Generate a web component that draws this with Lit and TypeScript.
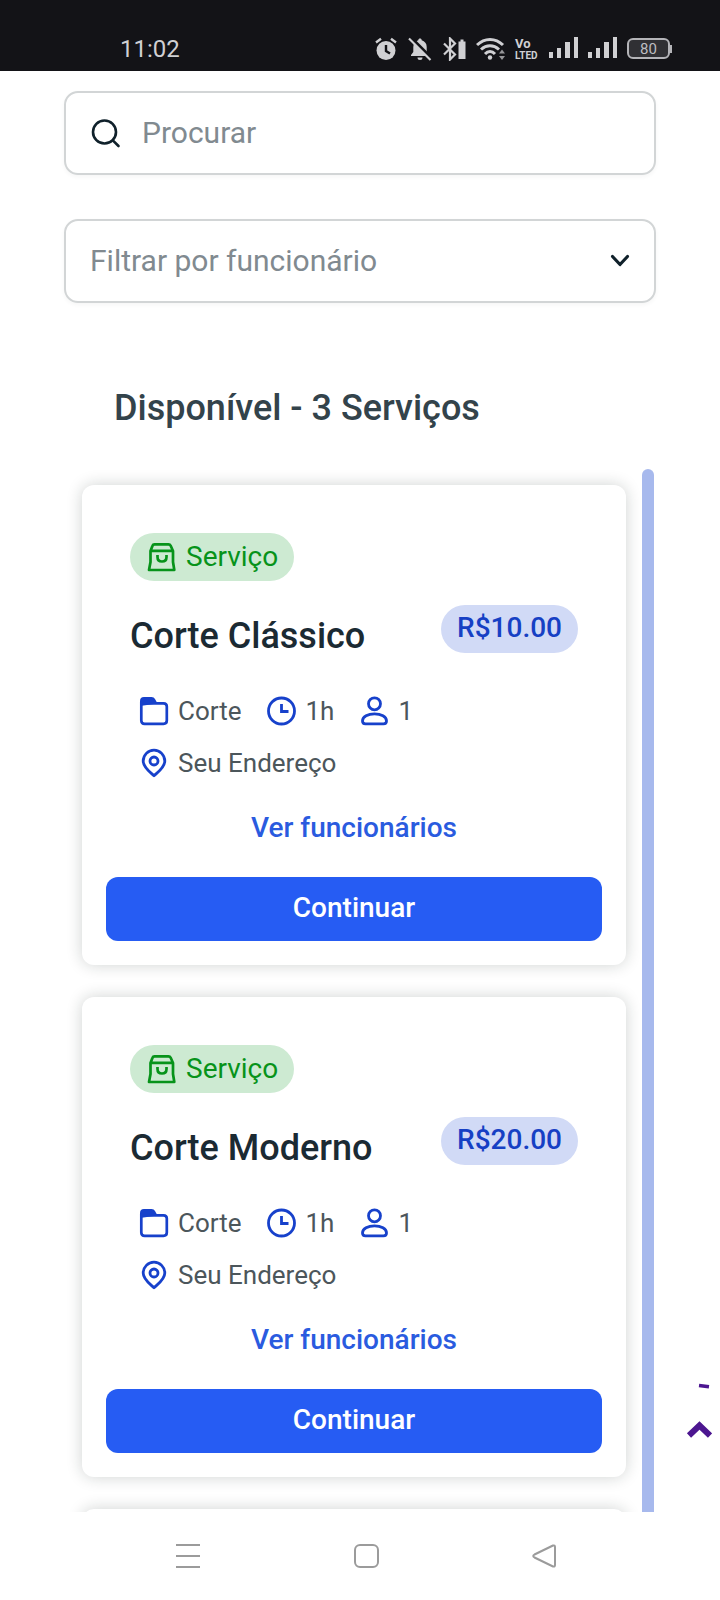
import { LitElement, html, css, svg } from "lit";
import { customElement, property } from "lit/decorators.js";

interface Service {
  name: string;
  price: string;
  category: string;
  duration: string;
  staff: number;
  address: string;
}

const services: Service[] = [
  { name: "Corte Clássico", price: "R$10.00", category: "Corte", duration: "1h", staff: 1, address: "Seu Endereço" },
  { name: "Corte Moderno", price: "R$20.00", category: "Corte", duration: "1h", staff: 1, address: "Seu Endereço" },
];

const bars = svg`<path d="M0 15h4v6H0zM8 11h4v10H8zM16 5h5v16h-5zM25 0h4v21h-4z" fill="currentColor"/>`;

@customElement("status-bar")
export class StatusBar extends LitElement {
  static styles = css`
    :host {
      display: flex;
      align-items: center;
      justify-content: space-between;
      box-sizing: border-box;
      height: 71px;
      padding: 26px 48px 0 120px;
      background: #131317;
      color: #d0d0d3;
      flex: none;
    }
    .time {
      font-size: 24px;
      line-height: 28px;
    }
    .icons {
      display: flex;
      align-items: center;
      gap: 10px;
    }
    svg {
      display: block;
    }
    .network {
      overflow: visible;
      font-weight: 700;
    }
    .battery {
      display: flex;
      align-items: center;
    }
    .level {
      box-sizing: border-box;
      width: 43px;
      height: 21px;
      border: 2px solid #b4b4b8;
      border-radius: 6px;
      font-size: 15px;
      line-height: 18px;
      text-align: center;
      background: #303034;
      color: #bdbdc1;
    }
    .tip {
      width: 2px;
      height: 8px;
      background: #b4b4b8;
    }
  `;

  render() {
    return html`
      <span class="time">11:02</span>
      <div class="icons">
        <svg width="24" height="24" viewBox="0 0 24 24" fill="none">
          <circle cx="12" cy="13.500" r="9.500" fill="currentColor" />
          <path d="M2 5.500 7 1.800M22 5.500 17 1.800" stroke="currentColor" stroke-width="2.400" />
          <path d="M12 8v6l4 2.500" stroke="#131317" stroke-width="2.400" />
        </svg>
        <svg width="24" height="24" viewBox="0 0 24 24">
          <path d="M12 1.500c1 0 1.700.7 1.700 1.700 3 .8 5 3.300 5 6.800v5l2.300 3v1H3v-1l2.300-3v-5c0-3.500 2-6 5-6.800 0-1 .7-1.700 1.700-1.700zM9.500 20.500h5a2.500 2.500 0 0 1-5 0z" fill="currentColor" />
          <path d="M3 .5 24 21.500" stroke="#131317" stroke-width="3" />
          <path d="M1 1.500 22.500 23" stroke="currentColor" stroke-width="2.200" />
        </svg>
        <svg width="24" height="24" viewBox="0 0 24 24" fill="none">
          <path d="M2 6.500 13 17.500 8 22.500v-21L13 6.500 2 17.500" stroke="currentColor" stroke-width="2.200" />
          <path d="M16.500 4.500h2V2.500h3v2h2V22h-7z" fill="currentColor" />
        </svg>
        <svg width="29" height="24" viewBox="0 0 29 24" fill="none" stroke="currentColor">
          <path d="M1 8c7.500-7.500 18.500-7.500 26 0" stroke-width="3" />
          <path d="M5 12.500c5.500-5 12.500-5 18 0" stroke-width="3" />
          <path d="M9 17c3-3.200 7-3.200 10 0" stroke-width="3" />
          <circle cx="14" cy="20.500" r="2.200" fill="currentColor" stroke="none" />
          <path d="M23 16.500l3-4 3 4zM23 19l3 4 3-4z" fill="currentColor" stroke="none" opacity=".7" />
        </svg>
        <svg class="network" width="24" height="32" viewBox="0 -4 24 32" fill="currentColor">
          <text x="0" y="11" font-size="13">Vo</text>
          <text x="0" y="22" font-size="10">LTED</text>
        </svg>
        <svg width="29" height="23" viewBox="0 0 29 23">${bars}</svg>
        <svg width="29" height="23" viewBox="0 0 29 23">${bars}</svg>
        <div class="battery"><div class="level">80</div><div class="tip"></div></div>
      </div>
    `;
  }
}

@customElement("service-card")
export class ServiceCard extends LitElement {
  @property({ attribute: false }) service?: Service;

  static styles = css`
    :host {
      display: block;
    }
    .card {
      box-sizing: border-box;
      min-height: 480px;
      padding: 24px;
      border-radius: 12px;
      background: #fff;
      box-shadow: 0 0 16px rgba(20, 35, 30, 0.2);
    }
    .info {
      padding: 24px 24px 0;
    }
    svg {
      display: block;
      flex: none;
    }
    .badge {
      display: inline-flex;
      align-items: center;
      gap: 8px;
      height: 48px;
      padding: 0 16px;
      border-radius: 24px;
      background: #cdead2;
      color: #07931a;
      font-size: 28px;
      line-height: 46px;
      vertical-align: top;
    }
    .heading {
      display: flex;
      justify-content: space-between;
      align-items: flex-start;
      margin-top: 24px;
    }
    h2 {
      margin: 0;
      font-size: 36px;
      line-height: 62px;
      font-weight: 500;
      color: #1b2a33;
    }
    .price {
      height: 48px;
      padding: 0 16px;
      border-radius: 24px;
      background: #d1daf6;
      color: #1640c4;
      font-size: 28px;
      line-height: 46px;
      font-weight: 500;
    }
    .meta {
      display: flex;
      flex-wrap: wrap;
      column-gap: 24px;
      margin: 18px 0 0;
      padding: 0 0 0 8px;
      list-style: none;
      color: #4c565b;
      font-size: 26px;
      line-height: 52px;
    }
    .meta li {
      display: flex;
      align-items: center;
      gap: 8px;
    }
    .meta svg {
      color: #1741cb;
    }
    .address {
      flex-basis: 100%;
    }
    .staff {
      display: block;
      width: fit-content;
      margin: 19px auto 29px;
      padding: 0;
      border: 0;
      background: none;
      color: #2a5bdf;
      font: 500 28px/40px Roboto, sans-serif;
    }
    .continue {
      display: block;
      width: 100%;
      height: 64px;
      padding: 0 0 2px;
      border: 0;
      border-radius: 12px;
      background: #265cf3;
      color: #fff;
      font: 500 28px/32px Roboto, sans-serif;
    }
  `;

  render() {
    const s = this.service;
    if (!s) return html`<article class="card"></article>`;
    return html`
      <article class="card">
        <div class="info">
          <span class="badge">
            <svg width="32" height="32" viewBox="0 0 32 32" fill="none" stroke="currentColor" stroke-width="2.700" stroke-linejoin="round">
              <path d="M8.500 3.300h14q1.500 0 2.200 1.500L27 10v11l1.300 8H3l1.500-8V10l2-5.200Q7 3.300 8.500 3.300zM4.500 9.800H27M11.500 14v2q0 4.500 4.500 4.500t4.500-4.500v-2" />
            </svg>
            Serviço
          </span>
          <div class="heading">
            <h2>${s.name}</h2>
            <span class="price">${s.price}</span>
          </div>
          <ul class="meta">
            <li>
              <svg width="32" height="32" viewBox="0 0 32 32" fill="none">
                <path d="M2 11V6q0-4 4-4h7.500q2.500 0 3.500 2l2.500 4.500z" fill="currentColor" />
                <path d="M3.300 8.300h22.200q3.300 0 3.300 3.300v13.900q0 3.300-3.300 3.300H6.600q-3.300 0-3.300-3.300z" stroke="currentColor" stroke-width="2.700" />
              </svg>
              ${s.category}
            </li>
            <li>
              <svg width="32" height="32" viewBox="0 0 32 32" fill="none" stroke="currentColor" stroke-width="2.800">
                <circle cx="15.500" cy="16" r="13" />
                <path d="M15.500 9v7.500h7" />
              </svg>
              ${s.duration}
            </li>
            <li>
              <svg width="32" height="32" viewBox="0 0 32 32" fill="none" stroke="currentColor" stroke-width="2.800">
                <circle cx="16.500" cy="8.800" r="6" />
                <path d="M16.500 18.800c6.500 0 12 3 12 7.200 0 2-1 2.800-3 2.800h-18c-2 0-3-.8-3-2.800 0-4.200 5.500-7.200 12-7.200z" />
              </svg>
              ${s.staff}
            </li>
            <li class="address">
              <svg width="32" height="32" viewBox="0 0 32 32" fill="none" stroke="currentColor" stroke-width="2.800">
                <path d="M16 28.800C12 25 5.200 20.500 5.200 14a10.800 10.800 0 0 1 21.600 0c0 6.500-6.800 11-10.800 14.800z" stroke-linejoin="round" />
                <circle cx="16" cy="14" r="4" />
              </svg>
              ${s.address}
            </li>
          </ul>
        </div>
        <button class="staff" type="button">Ver funcionários</button>
        <button class="continue" type="button">Continuar</button>
      </article>
    `;
  }
}

@customElement("app-root")
export class AppRoot extends LitElement {
  static styles = css`
    :host {
      display: flex;
      flex-direction: column;
      height: 100vh;
      background: #fff;
      font-family: Roboto, sans-serif;
    }
    main {
      position: relative;
      display: flex;
      flex-direction: column;
      flex: 1;
      min-height: 0;
      overflow: hidden;
      padding: 20px 64px 0;
    }
    svg {
      display: block;
      flex: none;
    }
    .field {
      display: flex;
      align-items: center;
      box-sizing: border-box;
      flex: none;
      height: 84px;
      padding: 0 24px;
      border: 2px solid #d2d5d6;
      border-radius: 14px;
      box-shadow: 0 2px 4px rgba(0, 0, 0, 0.04);
      color: #10212b;
    }
    .search {
      gap: 20px;
      margin-bottom: 44px;
    }
    .field input,
    .field select {
      flex: 1;
      min-width: 0;
      height: 60px;
      margin: 0;
      padding: 0;
      border: 0;
      outline: 0;
      appearance: none;
      background: none;
      color: #818a90;
      font: 400 30px/40px Roboto, sans-serif;
    }
    .field input {
      padding-bottom: 2px;
    }
    .field input::placeholder {
      color: #818a90;
      opacity: 1;
    }
    h1 {
      margin: 81px 0 37px;
      padding-left: 50px;
      font-size: 36px;
      line-height: 48px;
      font-weight: 500;
      color: #33434b;
    }
    .results {
      display: flex;
      flex: 1;
      gap: 16px;
      min-height: 0;
      padding: 0 2px 0 18px;
    }
    .list {
      display: flex;
      flex-direction: column;
      flex: 1;
      gap: 32px;
      padding-top: 16px;
    }
    .scrollbar {
      width: 12px;
      border-radius: 6px 6px 0 0;
      background: #a7b9ed;
    }
    .to-top {
      position: absolute;
      right: 8px;
      bottom: 69px;
      padding: 0;
      border: 0;
      background: none;
      color: #4c1690;
    }
    nav {
      display: flex;
      flex: none;
      align-items: center;
      justify-content: space-between;
      height: 88px;
      padding: 0 163px 0 175px;
      background: #fff;
    }
    nav button {
      padding: 0;
      border: 0;
      background: none;
      color: #9b9b9b;
    }
  `;

  render() {
    return html`
      <status-bar></status-bar>
      <main>
        <label class="field search">
          <svg width="32" height="32" viewBox="0 0 32 32" fill="none" stroke="currentColor" stroke-width="2.600" stroke-linecap="round">
            <circle cx="14.500" cy="15" r="11.500" />
            <path d="M22.800 23.300 28.500 29" />
          </svg>
          <input type="search" placeholder="Procurar" aria-label="Procurar" />
        </label>
        <label class="field">
          <select aria-label="Filtrar por funcionário">
            <option>Filtrar por funcionário</option>
          </select>
          <svg width="20" height="14" viewBox="0 0 20 14" fill="none" stroke="currentColor" stroke-width="3.200" stroke-linecap="round" stroke-linejoin="round">
            <path d="M2.500 2.500 10 10.500 17.500 2.500" />
          </svg>
        </label>
        <h1>Disponível - 3 Serviços</h1>
        <section class="results">
          <div class="list">
            ${services.map((s) => html`<service-card .service=${s}></service-card>`)}
            <service-card></service-card>
          </div>
          <div class="scrollbar"></div>
        </section>
        <button class="to-top" type="button" aria-label="Voltar ao topo">
          <svg width="26" height="60" viewBox="0 0 26 60" fill="none" stroke="currentColor">
            <path d="M13 2.500 23 3.800" stroke-width="3.500" />
            <path d="M3 52.500 13.500 42.500 24 52.500" stroke-width="6" />
          </svg>
        </button>
      </main>
      <nav>
        <button type="button" aria-label="Recentes">
          <svg width="26" height="26" viewBox="0 0 26 26" fill="none" stroke="currentColor" stroke-width="2"><path d="M1 2h24M1 13h24M1 24h24" /></svg>
        </button>
        <button type="button" aria-label="Início">
          <svg width="26" height="26" viewBox="0 0 26 26" fill="none" stroke="currentColor" stroke-width="2"><rect x="2" y="2" width="23" height="22" rx="5" /></svg>
        </button>
        <button type="button" aria-label="Voltar">
          <svg width="26" height="26" viewBox="0 0 26 26" fill="none" stroke="currentColor" stroke-width="2"><path d="M22 2.500 3.500 11.500q-2.500 1.500 0 3L22 23.500q2 .5 2-1.500V4q0-2-2-1.500z" /></svg>
        </button>
      </nav>
    `;
  }
}
